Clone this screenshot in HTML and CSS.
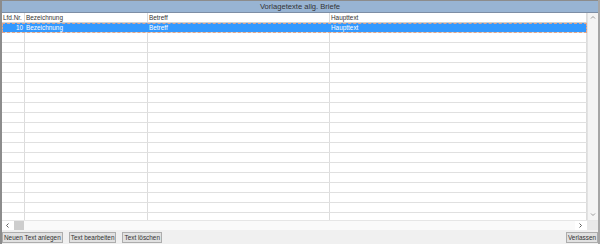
FILE: index.html
```html
<!DOCTYPE html>
<html>
  <head>
    <title>Vorlagetexte allg. Briefe</title>
    <meta name="viewport" content="width=device-width,initial-scale=1">
    <link rel="stylesheet" href="styles.css">
  </head>
  <body>
    <div class="window">
      <div class="title">Vorlagetexte allg. Briefe</div>
      <div class="grid">
        <div class="table">
          <div class="row head">
            <span class="cell">Lfd.Nr.</span>
            <span class="cell">Bezeichnung</span>
            <span class="cell">Betreff</span>
            <span class="cell">Haupttext</span>
          </div>
          <div class="row selected">
            <span class="cell num">10</span>
            <span class="cell">Bezeichnung</span>
            <span class="cell">Betreff</span>
            <span class="cell">Haupttext</span>
          </div>
          <div class="row"><span class="cell"></span><span class="cell"></span><span class="cell"></span><span class="cell"></span></div>
          <div class="row"><span class="cell"></span><span class="cell"></span><span class="cell"></span><span class="cell"></span></div>
          <div class="row"><span class="cell"></span><span class="cell"></span><span class="cell"></span><span class="cell"></span></div>
          <div class="row"><span class="cell"></span><span class="cell"></span><span class="cell"></span><span class="cell"></span></div>
          <div class="row"><span class="cell"></span><span class="cell"></span><span class="cell"></span><span class="cell"></span></div>
          <div class="row"><span class="cell"></span><span class="cell"></span><span class="cell"></span><span class="cell"></span></div>
          <div class="row"><span class="cell"></span><span class="cell"></span><span class="cell"></span><span class="cell"></span></div>
          <div class="row"><span class="cell"></span><span class="cell"></span><span class="cell"></span><span class="cell"></span></div>
          <div class="row"><span class="cell"></span><span class="cell"></span><span class="cell"></span><span class="cell"></span></div>
          <div class="row"><span class="cell"></span><span class="cell"></span><span class="cell"></span><span class="cell"></span></div>
          <div class="row"><span class="cell"></span><span class="cell"></span><span class="cell"></span><span class="cell"></span></div>
          <div class="row"><span class="cell"></span><span class="cell"></span><span class="cell"></span><span class="cell"></span></div>
          <div class="row"><span class="cell"></span><span class="cell"></span><span class="cell"></span><span class="cell"></span></div>
          <div class="row"><span class="cell"></span><span class="cell"></span><span class="cell"></span><span class="cell"></span></div>
          <div class="row"><span class="cell"></span><span class="cell"></span><span class="cell"></span><span class="cell"></span></div>
          <div class="row"><span class="cell"></span><span class="cell"></span><span class="cell"></span><span class="cell"></span></div>
          <div class="row"><span class="cell"></span><span class="cell"></span><span class="cell"></span><span class="cell"></span></div>
          <div class="row"><span class="cell"></span><span class="cell"></span><span class="cell"></span><span class="cell"></span></div>
          <div class="row"><span class="cell"></span><span class="cell"></span><span class="cell"></span><span class="cell"></span></div>
          <div class="row"><span class="cell"></span><span class="cell"></span><span class="cell"></span><span class="cell"></span></div>
        </div>
        <div class="vscroll">
          <svg class="arrow" width="10" height="9" viewBox="0 0 10 9"><path d="M3 5.5 L5 3.5 L7 5.5" fill="none" stroke="#9a9a9a" stroke-width="1"/></svg>
          <svg class="arrow" width="10" height="9" viewBox="0 0 10 9"><path d="M3 3.5 L5 5.5 L7 3.5" fill="none" stroke="#9a9a9a" stroke-width="1"/></svg>
        </div>
      </div>
      <div class="hscroll">
        <svg class="arrow" width="9" height="9" viewBox="0 0 9 9"><path d="M5.5 2.5 L3.5 4.5 L5.5 6.5" fill="none" stroke="#606060" stroke-width="1"/></svg>
        <div class="thumb"></div>
        <div class="track"></div>
        <svg class="arrow" width="9" height="9" viewBox="0 0 9 9"><path d="M3.5 2.5 L5.5 4.5 L3.5 6.5" fill="none" stroke="#606060" stroke-width="1"/></svg>
        <div class="corner"></div>
      </div>
      <div class="buttons">
        <button class="btn">Neuen Text anlegen</button>
        <button class="btn">Text bearbeiten</button>
        <button class="btn">Text löschen</button>
        <span class="spacer"></span>
        <button class="btn">Verlassen</button>
      </div>
    </div>
  </body>
</html>
```

FILE: styles.css
```css
html, body {
  margin: 0;
  padding: 0;
}

body {
  width: 600px;
  height: 244px;
  overflow: hidden;
  background: #f0f0f0;
  font-family: "Liberation Sans", Arial, sans-serif;
  font-size: 6.4px;
  color: #333;
}

.window {
  display: flex;
  flex-direction: column;
  height: 244px;
  border-left: 2px solid #8c8c8c;
  border-right: 2px solid #a6a6a6;
  box-sizing: border-box;
}

.title {
  height: 11px;
  line-height: 11px;
  border-top: 1px solid #8c8c8c;
  border-bottom: 1px solid #7d8ea5;
  background: #98b4d3;
  text-align: center;
  font-size: 7.6px;
  color: #333;
}

.grid {
  display: flex;
  height: 207px;
  background: #fff;
}

.table {
  flex: 1;
  overflow: hidden;
}

.row {
  display: grid;
  grid-template-columns: 23px 123px 182px 1fr;
  height: 10px;
  box-sizing: border-box;
  border-bottom: 1px solid #e0e0e0;
}

.row.head {
  border-bottom: 1px solid #d0d0d0;
}

.cell {
  border-right: 1px solid #dcdcdc;
  padding-left: 1px;
  line-height: 9px;
  white-space: nowrap;
  overflow: hidden;
}

.row.selected {
  background: #3399ff;
  color: #fff;
  outline: 1px dashed #e3a58a;
  outline-offset: -1px;
}

.selected .cell {
  border-right-color: #3399ff;
}

.num {
  text-align: right;
  padding-right: 1px;
  padding-left: 0;
}

.vscroll {
  width: 10px;
  display: flex;
  flex-direction: column;
  justify-content: space-between;
  background: #f4f4f4;
  border-left: 1px solid #e2e2e2;
  padding: 0 0 1px;
}

.arrow {
  display: block;
}

.hscroll {
  display: flex;
  height: 10px;
  background: #fff;
  border-top: 1px solid #e6e6e6;
  box-sizing: border-box;
}

.hscroll .arrow {
  margin: 0 2px 0 1px;
}

.thumb {
  width: 10px;
  background: #cdcdcd;
}

.track {
  flex: 1;
  background: #fafafa;
}

.corner {
  width: 11px;
  background: #e8e8e8;
}

.buttons {
  display: flex;
  gap: 6px;
  padding: 2px 0 2px;
  height: 14px;
  box-sizing: border-box;
  align-items: flex-start;
}

.btn {
  height: 11px;
  padding: 0 1px;
  margin: 0;
  font-family: "Liberation Sans", Arial, sans-serif;
  font-size: 6.4px;
  line-height: 9px;
  color: #333;
  background: #e1e1e1;
  border: 1px solid #adadad;
}

.spacer {
  flex: 1;
}
```
